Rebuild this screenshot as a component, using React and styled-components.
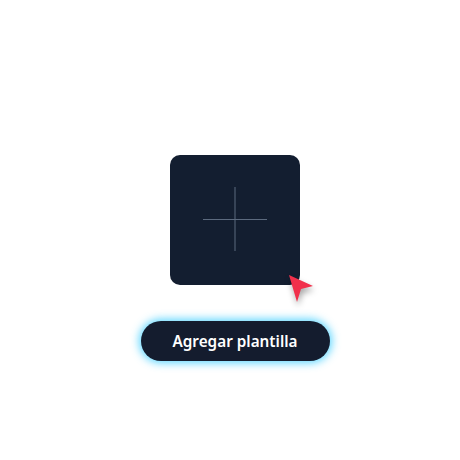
import React from "react";
import styled, { createGlobalStyle } from "styled-components";

const Global = createGlobalStyle`
  html, body {
    margin: 0;
    padding: 0;
    background: #ffffff;
  }
  body {
    font-family: "Noto Sans", "Open Sans", sans-serif;
  }
`;

const Page = styled.div`
  width: 460px;
  height: 460px;
  display: flex;
  flex-direction: column;
  align-items: center;
  padding: 155px 0 0 10px;
  box-sizing: border-box;
  gap: 36px;
`;

const Card = styled.div`
  position: relative;
  width: 130px;
  height: 130px;
  border-radius: 10px;
  background: #131e30;
  display: flex;
  align-items: center;
  justify-content: center;
`;

const Plus = styled.svg`
  width: 66px;
  height: 66px;
  display: block;
`;

const Cursor = styled.svg`
  position: absolute;
  left: 119px;
  top: 120px;
  width: 28px;
  height: 30px;
  overflow: visible;
  filter: drop-shadow(1px 4px 3px rgba(0, 0, 0, 0.35));
`;

const AddButton = styled.button`
  width: 189px;
  height: 40px;
  border: none;
  border-radius: 20px;
  background: #141c2e;
  color: #ffffff;
  font-family: "Noto Sans", "Open Sans", sans-serif;
  font-weight: 600;
  font-size: 15.3px;
  cursor: pointer;
  box-shadow: 0 0 8px 2px rgba(40, 200, 255, 0.75);
`;

export default function App() {
  return (
    <>
      <Global />
      <Page>
        <Card>
          <Plus viewBox="0 0 66 66">
            <line x1="33" y1="0" x2="33" y2="64" stroke="#5c6a7e" strokeWidth="1" />
            <line x1="1" y1="32.5" x2="65" y2="32.5" stroke="#5c6a7e" strokeWidth="1" />
          </Plus>
          <Cursor viewBox="0 0 28 30">
            <path d="M0 0 L24 11 L12 14 L8 27 Z" fill="#f1304b" strokeLinejoin="round" />
          </Cursor>
        </Card>
        <AddButton>Agregar plantilla</AddButton>
      </Page>
    </>
  );
}
